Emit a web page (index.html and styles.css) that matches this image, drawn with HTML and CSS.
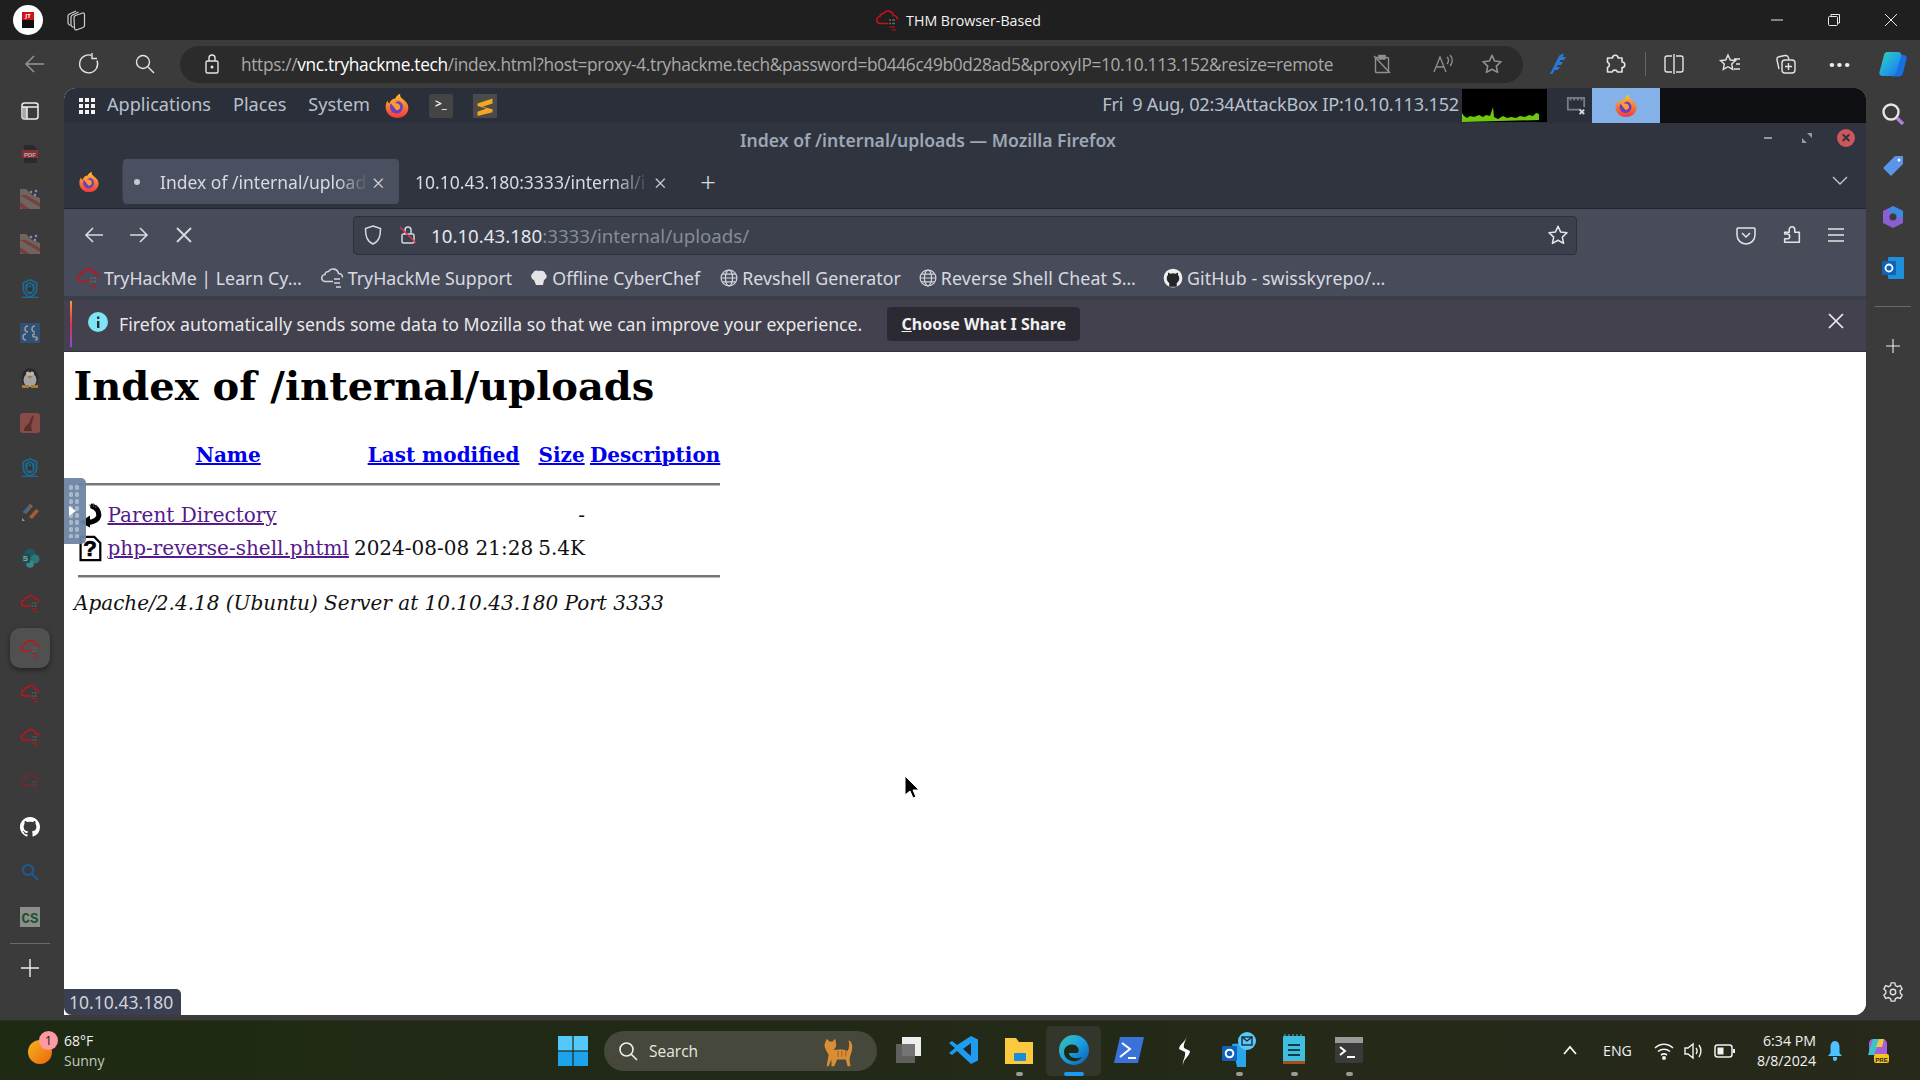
FILE: index.html
```html
<!DOCTYPE html>
<html lang="en">
<head>
    <meta charset="UTF-8">
    <title>THM Browser-Based</title>
    <link rel="stylesheet" href="styles.css">
</head>
<body>
    <svg class="sprites" width="0" height="0">
        <defs>
            <linearGradient id="fox-grad" x1="0" y1="0" x2="0" y2="1">
                <stop offset="0" stop-color="#ffc22e"/>
                <stop offset="1" stop-color="#f0393f"/>
            </linearGradient>
            <linearGradient id="copilot-grad" x1="0" y1="0" x2="1" y2="1">
                <stop offset="0" stop-color="#2fd6b5"/>
                <stop offset=".6" stop-color="#1f9be8"/>
                <stop offset="1" stop-color="#1f6fe0"/>
            </linearGradient>
            <linearGradient id="edge-grad" x1="0" y1="0" x2="1" y2="1">
                <stop offset="0" stop-color="#38c9a8"/>
                <stop offset=".5" stop-color="#1b9de2"/>
                <stop offset="1" stop-color="#0c5aa6"/>
            </linearGradient>
            <symbol id="thm" viewBox="0 0 24 24">
                <path d="M13 15.500H5.500a3.500 3.500 0 0 1-.5-7A3.200 3.200 0 0 1 8.500 5.500 5.500 5.500 0 0 1 18.500 7.500 4 4 0 0 1 22.500 11.500" fill="none" stroke="#c8101a" stroke-width="1.700"/>
                <path d="M14 12h2m1 0h3M14 15.500h2m1 0h3" stroke="#666" stroke-width="1.300"/>
                <path d="M14 19h6M17 22h4" stroke="#c8101a" stroke-width="1.200"/>
            </symbol>
            <symbol id="fox" viewBox="0 0 24 24">
                <path d="M12 23C5.500 23 1.500 18 1.500 13c0-2.500.8-4.600 1.800-6 .2 1.300.8 2.200 1.600 2.700C5.800 6.500 8.500 5 10.500 5 11 3.500 12.800 1.500 15 .8c-.5 2 .3 3.300 2 4.600 3.200 2.400 5.500 4.800 5.500 8.100C22.500 18.500 18.500 23 12 23z" fill="url(#fox-grad)"/>
                <circle cx="11.500" cy="13" r="6" fill="#6a3fc4"/>
                <path d="M6 9c2-2.500 6-3 8.500-1.500-2 0-4 .5-4.500 2 2.500-.5 5 .5 5 3.500 0 2-2 3-3.500 3" fill="#ff9a2e"/>
            </symbol>
            <symbol id="globe" viewBox="0 0 16 16">
                <g fill="none" stroke="#cfd3da" stroke-width="1.100">
                    <circle cx="8" cy="8" r="7"/>
                    <ellipse cx="8" cy="8" rx="3.200" ry="7"/>
                    <path d="M1 8h14M2 4.500h12M2 11.500h12"/>
                </g>
            </symbol>
            <symbol id="shield-lock" viewBox="0 0 24 24">
                <path d="M12 1l8 3.500v7.500c0 5-3.500 8-8 9.500C7.500 20 4 17 4 12V4.500z" fill="none" stroke="#1c6a93" stroke-width="2"/>
                <path d="M12 4l5.500 2.400V12c0 3.500-2.500 5.500-5.500 6.700C9 17.500 6.500 15.500 6.500 12V6.400z" fill="#1c6a93"/>
                <rect x="9" y="10" width="6" height="5" fill="#333"/>
                <path d="M10 10V8.500a2 2 0 0 1 4 0V10" fill="none" stroke="#333" stroke-width="1.200"/>
                <path d="M2 22h20" stroke="#1c6a93" stroke-width="1.600"/>
            </symbol>
            <symbol id="flag" viewBox="0 0 20 20">
                <rect width="20" height="20" fill="#8d7a72"/>
                <path d="M0 6l20 12v-4L6 6zM0 13l10 7H3l-3-2z" fill="#95433f"/>
                <path d="M6 0h14v9L12 6z" fill="#36384f"/>
                <circle cx="11" cy="3" r="1.300" fill="#bbb"/><circle cx="16" cy="2" r="1.300" fill="#bbb"/><circle cx="15" cy="6" r="1.300" fill="#bbb"/>
            </symbol>
            <symbol id="star" viewBox="0 0 24 24">
                <path d="M12 2.500l2.900 6.300 6.900.8-5.100 4.700 1.400 6.800-6.100-3.400-6.100 3.400 1.400-6.800-5.100-4.700 6.900-.8z" fill="none" stroke="currentColor" stroke-width="1.700" stroke-linejoin="round"/>
            </symbol>
            <symbol id="puzzle" viewBox="0 0 24 24">
                <path d="M4 9h5V6a3 3 0 0 1 6 0v3h5v11H4v-4h3a2.500 2.500 0 0 0 0-5H4z" fill="none" stroke="currentColor" stroke-width="1.700" stroke-linejoin="round"/>
            </symbol>
        </defs>
    </svg>

    <div class="screen">
        <header class="titlebar">
            <div class="tb-left">
                <div class="profile"><span class="profile-badge">JT</span></div>
                <svg class="ic-22" viewBox="0 0 22 22" fill="none" stroke="#cfcfcf" stroke-width="1.200"><path d="M2 7c0-1 .5-1.500 1.500-2L10 2M4.500 16.500L3 15.500C2.300 15 2 14.500 2 13.500V7"/><path d="M5 8c0-1 .5-1.500 1.500-2l6-3M7.500 18.500L6 17.500C5.300 17 5 16.500 5 15.500V8"/><path d="M8 8.500c0-1 .5-1.500 1.500-2l7-2.500c1-.3 2 .3 2 1.500v11c0 1-.5 1.500-1.500 2l-6 2.300c-1.200.4-2.500-.3-2.500-1.500z"/></svg>
            </div>
            <div class="tb-title">
                <svg class="ic-24"><use href="#thm"/></svg>
                <span>THM Browser-Based</span>
            </div>
            <div class="win-controls">
                <svg class="ic-14" viewBox="0 0 14 14" stroke="#e8e8e8" fill="none"><path d="M1 7h12"/></svg>
                <svg class="ic-14" viewBox="0 0 14 14" stroke="#e8e8e8" fill="none"><rect x="1.500" y="3.500" width="9" height="9" rx="1"/><path d="M4 3V1.500h8.500V10H11"/></svg>
                <svg class="ic-14" viewBox="0 0 14 14" stroke="#e8e8e8" fill="none"><path d="M1 1l12 12M13 1L1 13"/></svg>
            </div>
        </header>

        <div class="edge-bar">
            <div class="edge-nav">
                <svg class="ic-24 dim" viewBox="0 0 24 24" fill="none" stroke="currentColor" stroke-width="1.400"><path d="M21 12H3M11 4l-8 8 8 8"/></svg>
                <svg class="ic-24" viewBox="0 0 24 24" fill="none" stroke="currentColor" stroke-width="1.400"><path d="M19 8.500A9 9 0 1 1 13 3.200M14 1v5.500h5"/></svg>
                <svg class="ic-24" viewBox="0 0 24 24" fill="none" stroke="currentColor" stroke-width="1.400"><circle cx="10" cy="10" r="6.500"/><path d="M15 15l6 6"/></svg>
            </div>
            <div class="edge-url">
                <svg class="ic-20" viewBox="0 0 20 20" fill="none" stroke="currentColor" stroke-width="1.400"><rect x="4" y="7" width="12" height="12" rx="1.500"/><path d="M7 7V4a3 3 0 0 1 6 0v3"/><circle cx="10" cy="13" r=".8" fill="currentColor"/></svg>
                <span class="edge-url-text">https://<b>vnc.tryhackme.tech</b>/index.html?host=proxy-4.tryhackme.tech&amp;password=b0446c49b0d28ad5&amp;proxyIP=10.10.113.152&amp;resize=remote</span>
                <div class="edge-url-icons">
                    <svg class="ic-20 dim" viewBox="0 0 20 20" fill="none" stroke="currentColor" stroke-width="1.400"><rect x="3.500" y="3.500" width="13" height="15" rx="1"/><rect x="7" y="1.500" width="6" height="3.500" fill="currentColor"/><path d="M2 2l16 17"/></svg>
                    <svg class="ic-22 dim read-aloud" viewBox="0 0 22 22" fill="none" stroke="currentColor" stroke-width="1.300"><path d="M2 19l6-15 6 15M4.500 14h7M15 4c2 1.500 2 5 0 7M18 2c3 3 3 8 0 11"/></svg>
                    <svg class="ic-22 dim fav-star"><use href="#star"/></svg>
                </div>
            </div>
            <div class="edge-tools">
                <svg class="ic-22" viewBox="0 0 22 22"><path d="M3 21L12 3c1-1.500 3-2 5-2l-1.500 3H19l-2 3h-3.500L12.500 9H16l-2 3h-3.500l-1 2H13l-2 3H7.500l-2 4z" fill="#2a78d8"/></svg>
                <svg class="ic-24 edge-puzzle" viewBox="0 0 24 24" fill="none" stroke="currentColor" stroke-width="1.600" stroke-linejoin="round"><path d="M9.500 6a2.800 2.800 0 0 1 5.600 0H19v4a2.800 2.800 0 0 1 0 5.600V20h-4.500a2.800 2.800 0 0 0-5.300 0H4.500v-4.500a2.800 2.800 0 0 0 0-5.300V6z"/></svg>
                <span class="edge-sep"></span>
                <svg class="ic-22" viewBox="0 0 22 22" fill="none" stroke="currentColor" stroke-width="1.400"><path d="M11 1v20M9 3H4a2 2 0 0 0-2 2v12a2 2 0 0 0 2 2h5M13 3h5a2 2 0 0 1 2 2v12a2 2 0 0 1-2 2h-5"/></svg>
                <svg class="ic-24 edge-favs" viewBox="0 0 24 24" fill="none" stroke="currentColor" stroke-width="1.400"><path d="M10 3l2.300 5 5.200.6-3.800 3.500 1 5.200L10 14.700l-4.700 2.600 1-5.200L2.500 8.600 7.700 8zM16 7h6M18 12h4M16 17h6"/></svg>
                <svg class="ic-24" viewBox="0 0 24 24" fill="none" stroke="currentColor" stroke-width="1.400"><path d="M6 17l-2-9c-.3-1.500.5-3 2-3.300l6-1.200c1.500-.3 3 .5 3.300 2l.7 2"/><rect x="9" y="8" width="13" height="13" rx="3"/><path d="M15.500 11v7M12 14.500h7"/></svg>
                <span class="edge-dots">&middot;&middot;&middot;</span>
                <svg class="ic-30 edge-copilot" viewBox="0 0 30 30"><path d="M19 6h6c3 0 4 2 3.500 4L25 24c-.5 2-2 3.500-4.500 3.500H14z" fill="#1670e0"/><path d="M9 3h11c2 0 3 1 3.500 3L18 24c-.5 2-2 3-4 3H5c-3 0-4-2-3.500-4L6 6c.5-2 1.500-3 3-3z" fill="url(#copilot-grad)"/></svg>
            </div>
        </div>

        <div class="main-row">
            <aside class="side-left">
                <svg class="side-ic side-first" viewBox="0 0 20 20" fill="none" stroke="#eee" stroke-width="1.500"><rect x="2" y="2" width="16" height="16" rx="2.500"/><rect x="2.500" y="6" width="4.500" height="11.500" fill="#aaa" stroke="none"/><path d="M2 6h16M7 6v12"/></svg>
                <svg class="side-ic dimmed" viewBox="0 0 20 20"><path d="M4 1h9l4 4v14H4z" fill="#222"/><rect x="2" y="6" width="16" height="8" fill="#b02a36"/><text x="10" y="12.500" class="pdf-text">PDF</text></svg>
                <svg class="side-ic dimmed"><use href="#flag"/></svg>
                <svg class="side-ic dimmed"><use href="#flag"/></svg>
                <svg class="side-ic"><use href="#shield-lock"/></svg>
                <svg class="side-ic dimmed" viewBox="0 0 20 20"><rect width="20" height="20" fill="#2d5c99"/><path d="M8 3a3 3 0 1 0 0 6M15 3a3 3 0 1 0 0 6M6 11a3 3 0 1 0 0 6M15 11c-3 0-3 3 0 3s3 3 0 3" fill="none" stroke="#ccc" stroke-width="1.500"/></svg>
                <svg class="side-ic dimmed" viewBox="0 0 20 20"><ellipse cx="10" cy="10" rx="8.500" ry="10" fill="#222"/><ellipse cx="10" cy="12" rx="6.500" ry="7" fill="#ddd"/><circle cx="8" cy="5.500" r="2" fill="#fff"/><circle cx="12" cy="5.500" r="2" fill="#fff"/><path d="M7.500 8h5L10 11zM2 17h7v3H2zM11 17h7v3h-7z" fill="#e0a030"/></svg>
                <svg class="side-ic dimmed" viewBox="0 0 20 20"><rect width="20" height="20" rx="3" fill="#b5534f"/><path d="M14 2c-5 3-3 7-6 9-2 2-4 3-4 7h8c0-3-2-5 0-8" fill="#662a2a"/></svg>
                <svg class="side-ic"><use href="#shield-lock"/></svg>
                <svg class="side-ic dimmed" viewBox="0 0 20 20"><path d="M3 9l7-8 3 2-7 8zM9 14l7-8 3 2-7 8z" fill="#e0702a"/><path d="M3 9l6-7 2 1.500-6 7z" fill="#2a80d0"/><path d="M2 15l3 3H2z" fill="#ccc"/></svg>
                <svg class="side-ic dimmed" viewBox="0 0 20 20"><circle cx="10" cy="6" r="5.500" fill="#0d6d6d"/><circle cx="15" cy="11" r="4.500" fill="#1f9a9a"/><circle cx="10" cy="16" r="3.800" fill="#37b5b5"/><rect x="1" y="6" width="9" height="9" rx="1" fill="#0b5a5a"/><text x="5.500" y="13" class="sp-text">S</text></svg>
                <svg class="side-ic"><use href="#thm"/></svg>
                <span class="side-active"><svg class="side-ic"><use href="#thm"/></svg></span>
                <svg class="side-ic"><use href="#thm"/></svg>
                <svg class="side-ic"><use href="#thm"/></svg>
                <svg class="side-ic faded"><use href="#thm"/></svg>
                <svg class="side-ic" viewBox="0 0 16 16"><path fill="#fff" d="M8 0C3.580 0 0 3.580 0 8c0 3.540 2.290 6.530 5.470 7.590.4.070.55-.17.55-.38 0-.19-.01-.82-.01-1.490-2.010.37-2.530-.49-2.690-.94-.09-.23-.48-.94-.82-1.130-.28-.15-.68-.52-.01-.53.630-.01 1.080.58 1.230.82.720 1.210 1.870.87 2.330.66.070-.52.280-.87.510-1.070-1.780-.2-3.640-.89-3.640-3.950 0-.87.310-1.590.82-2.150-.08-.2-.36-1.020.08-2.120 0 0 .67-.21 2.200.82.640-.18 1.320-.27 2-.27s1.360.09 2 .27c1.530-1.040 2.200-.82 2.200-.82.440 1.100.16 1.920.08 2.120.51.560.82 1.270.82 2.150 0 3.070-1.870 3.750-3.650 3.950.29.250.54.730.54 1.480 0 1.070-.01 1.930-.01 2.200 0 .21.150.46.550.38A8.010 8.010 0 0 0 16 8c0-4.420-3.580-8-8-8z"/></svg>
                <svg class="side-ic" viewBox="0 0 20 20" fill="none" stroke="#1b5c96" stroke-width="2.200"><circle cx="8" cy="8" r="5"/><path d="M12 12l6 6"/></svg>
                <svg class="side-ic" viewBox="0 0 20 20"><rect width="20" height="20" fill="#8a8f8a"/><text x="10" y="16" class="cs-text">CS</text></svg>
                <span class="side-rule"></span>
                <svg class="side-plus" viewBox="0 0 18 18" stroke="#eee" stroke-width="1.400"><path d="M9 0v18M0 9h18"/></svg>
            </aside>

            <main class="remote">
                <div class="gnome-panel">
                    <svg class="ic-18" viewBox="0 0 18 18" fill="#f2f2f2"><rect x="1" y="1" width="4" height="4"/><rect x="7" y="1" width="4" height="4"/><rect x="13" y="1" width="4" height="4"/><rect x="1" y="7" width="4" height="4"/><rect x="7" y="7" width="4" height="4"/><rect x="13" y="7" width="4" height="4"/><rect x="1" y="13" width="4" height="4"/><rect x="7" y="13" width="4" height="4"/><rect x="13" y="13" width="4" height="4"/></svg>
                    <span class="panel-menu panel-apps">Applications</span>
                    <span class="panel-menu">Places</span>
                    <span class="panel-menu">System</span>
                    <svg class="ic-26 panel-launch"><use href="#fox"/></svg>
                    <span class="term-btn">&gt;_</span>
                    <span class="subl-btn"><svg class="ic-20" viewBox="0 0 16 16"><path d="M2 6l12-4v4L6 8.500l8 2V13L2 16v-3.500l7-2.500-7-2z" fill="#f5a623"/></svg></span>
                    <span class="panel-clock">Fri&nbsp; 9 Aug, 02:34AttackBox IP:10.10.113.152</span>
                    <svg class="net-graph" viewBox="0 0 85 33" preserveAspectRatio="none"><rect width="85" height="33" fill="#000"/><path d="M0 33V24l2 3 3 2 3-2 4 1 5-2 4 2 3-2 4 1 3-9 1 10 4 2 5-3 4 2 4-1 5 1 4-2 5 1 4-2 4 1 3-3 3 1v6z" fill="#6fc80e"/></svg>
                    <svg class="net-icon" viewBox="0 0 22 22" fill="none" stroke="#7a7d82" stroke-width="2"><path d="M17 15H2V2h18v10M5 2v3M9 2v3M13 2v3M17 2v3"/><path d="M15 15l5 5M20 15l-5 5" stroke="#ddd"/></svg>
                    <span class="task-active"><svg class="ic-24"><use href="#fox"/></svg></span>
                    <span class="task-empty"></span>
                </div>

                <div class="fx-titlebar">
                    <span class="fx-title">Index of /internal/uploads &mdash; Mozilla Firefox</span>
                    <div class="fx-win">
                        <span class="fx-min"></span>
                        <svg class="ic-10" viewBox="0 0 10 10" fill="#999"><path d="M5 0h5v5zM0 5v5h5z"/></svg>
                        <span class="fx-close">&times;</span>
                    </div>
                </div>

                <div class="fx-tabs">
                    <svg class="ic-22 fx-logo"><use href="#fox"/></svg>
                    <div class="tab tab-active">
                        <span class="tab-dot"></span>
                        <span class="tab-label">Index of /internal/upload</span>
                        <span class="tab-x">&times;</span>
                    </div>
                    <div class="tab">
                        <span class="tab-label">10.10.43.180:3333/internal/i</span>
                        <span class="tab-x">&times;</span>
                    </div>
                    <span class="tab-new">+</span>
                    <svg class="tab-list" viewBox="0 0 16 10" fill="none" stroke="#c5c9d0" stroke-width="1.300"><path d="M1 1l7 7 7-7"/></svg>
                </div>

                <div class="fx-nav">
                    <svg class="ic-20 nav-btn" viewBox="0 0 20 20" fill="none" stroke="currentColor" stroke-width="1.600"><path d="M19 10H2M9 3l-7 7 7 7"/></svg>
                    <svg class="ic-20 nav-btn" viewBox="0 0 20 20" fill="none" stroke="currentColor" stroke-width="1.600"><path d="M1 10h17M11 3l7 7-7 7"/></svg>
                    <svg class="ic-20 nav-btn" viewBox="0 0 20 20" fill="none" stroke="currentColor" stroke-width="1.800"><path d="M3 3l14 14M17 3L3 17"/></svg>
                    <div class="urlbar">
                        <svg class="ic-20" viewBox="0 0 20 20" fill="none" stroke="#d5d8de" stroke-width="1.500"><path d="M10 1l7.500 2.500c0 7-1 12.500-7.500 15.500C3.500 16 2.500 10.500 2.500 3.500z"/></svg>
                        <svg class="ic-20 url-lock" viewBox="0 0 20 20" fill="none"><rect x="4" y="9" width="12" height="9" rx="1.500" stroke="#d5d8de" stroke-width="1.500"/><path d="M7 9V5a3 3 0 0 1 6 0v4" stroke="#d5d8de" stroke-width="1.500"/><path d="M2 2l16 16" stroke="#e0314a" stroke-width="1.500"/></svg>
                        <span class="url-text">10.10.43.180<span class="url-rest">:3333/internal/uploads/</span></span>
                        <svg class="ic-22 url-star"><use href="#star"/></svg>
                    </div>
                    <div class="nav-right">
                        <svg class="ic-20" viewBox="0 0 20 20" fill="none" stroke="currentColor" stroke-width="1.500"><path d="M2 3h16a1 1 0 0 1 1 1v6a9 9 0 0 1-18 0V4a1 1 0 0 1 1-1zM6 8l4 4 4-4"/></svg>
                        <svg class="ic-22"><use href="#puzzle"/></svg>
                        <svg class="ic-20 nav-menu" viewBox="0 0 20 20" stroke="currentColor" stroke-width="1.700"><path d="M2 4h16M2 10h16M2 16h16"/></svg>
                    </div>
                </div>

                <div class="fx-bookmarks">
                    <span class="bm"><svg class="ic-24"><use href="#thm"/></svg>TryHackMe | Learn Cy&hellip;</span>
                    <span class="bm"><svg class="ic-24" viewBox="0 0 24 24" fill="none" stroke="#d0d3d9" stroke-width="1.600"><path d="M13 15.500H5.500a3.500 3.500 0 0 1-.5-7A3.200 3.200 0 0 1 8.500 5.500 5.500 5.500 0 0 1 18.500 7.500 4 4 0 0 1 22.500 11.500M14 13h6M14 17h6M16 21h5"/></svg>TryHackMe Support</span>
                    <span class="bm"><svg class="ic-18" viewBox="0 0 18 18" fill="#e4e4e4"><path d="M4 11C1 10 0 6 3 4c1-3 4-3 6-2 3-1 6 0 6.500 3C18 7 16 10 14 11l-1 5H6z"/></svg>Offline CyberChef</span>
                    <span class="bm bm-revshell"><svg class="ic-18"><use href="#globe"/></svg>Revshell Generator</span>
                    <span class="bm bm-cheat"><svg class="ic-18"><use href="#globe"/></svg>Reverse Shell Cheat S&hellip;</span>
                    <span class="bm bm-github"><svg class="ic-20" viewBox="0 0 16 16"><circle cx="8" cy="8" r="7.500" fill="#eee"/><path d="M5 15v-3C3.500 11 3 9.500 3 8c0-1 .5-2 1-2.500V3.500l2 1a6 6 0 0 1 4 0l2-1v2c.5.500 1 1.500 1 2.500 0 1.500-.5 3-2 4v3z" fill="#23252b"/></svg>GitHub - swisskyrepo/&hellip;</span>
                </div>

                <div class="fx-notice">
                    <span class="notice-edge"></span>
                    <svg class="ic-20 notice-info" viewBox="0 0 20 20"><circle cx="10" cy="10" r="10" fill="#7fe4f5"/><rect x="9" y="9" width="2.400" height="7" fill="#2b2a33"/><rect x="9" y="4.500" width="2.400" height="2.400" fill="#2b2a33"/></svg>
                    <span class="notice-text">Firefox automatically sends some data to Mozilla so that we can improve your experience.</span>
                    <span class="notice-btn"><u>C</u>hoose What I Share</span>
                    <svg class="ic-18 notice-x" viewBox="0 0 18 18" stroke="#eee" stroke-width="1.700"><path d="M2 2l14 14M16 2L2 16"/></svg>
                </div>

                <section class="listing">
                    <h1>Index of /internal/uploads</h1>
                    <table class="files">
                        <tr>
                            <th class="col-icon"></th>
                            <th><a href="#">Name</a></th>
                            <th><a href="#">Last modified</a></th>
                            <th><a href="#">Size</a></th>
                            <th><a href="#">Description</a></th>
                        </tr>
                        <tr class="rule-top"><th colspan="5" class="rule-cell"><hr></th></tr>
                        <tr>
                            <td class="col-icon">
                                <svg class="file-ic" viewBox="0 0 28 30"><path d="M15 4c7 1 10 7 9 12-1 4-5 6-11 7" fill="none" stroke="#000" stroke-width="6"/><path d="M14 15v14L2 23z" fill="#000"/><path d="M14 2l1 4M18 1v4M22 3l-2 3" stroke="#444" stroke-width="1.500"/></svg>
                            </td>
                            <td><a class="seen" href="#">Parent Directory</a></td>
                            <td></td>
                            <td class="col-size">-</td>
                            <td></td>
                        </tr>
                        <tr>
                            <td class="col-icon">
                                <svg class="file-ic" viewBox="0 0 28 30"><path d="M3 1.500h16l7 7V28.500H3z" fill="#fff" stroke="#000" stroke-width="2.600"/><text x="14" y="24" class="unknown-mark">?</text></svg>
                            </td>
                            <td><a class="seen" href="#">php-reverse-shell.phtml</a></td>
                            <td>2024-08-08 21:28</td>
                            <td class="col-size">5.4K</td>
                            <td></td>
                        </tr>
                        <tr class="rule-bottom"><th colspan="5" class="rule-cell"><hr></th></tr>
                    </table>
                    <address>Apache/2.4.18 (Ubuntu) Server at 10.10.43.180 Port 3333</address>

                    <div class="vnc-handle">
                        <span class="handle-dots"></span>
                        <span class="handle-arrow"></span>
                    </div>
                    <svg class="cursor" viewBox="0 0 16 24"><path d="M1 1v19l5-4 3 7 3-1-3-7h6z" fill="#000" stroke="#fff" stroke-width="1"/></svg>
                    <span class="status-tip">10.10.43.180</span>
                </section>
            </main>

            <aside class="side-right">
                <svg class="ic-26" viewBox="0 0 26 26" fill="none"><circle cx="11" cy="11" r="7.500" stroke="#e6e6e6" stroke-width="2.400"/><path d="M17 17l6 6" stroke="#b47fe0" stroke-width="3.500"/></svg>
                <svg class="ic-24" viewBox="0 0 24 24"><path d="M14 2h8v8L10 22 2 14z" fill="#5b94e8"/><circle cx="18" cy="6" r="1.500" fill="#fff"/></svg>
                <svg class="ic-24" viewBox="0 0 24 24"><path d="M12 1l10 5v12l-10 5-10-5V6z" fill="#8a5fd6"/><path d="M12 1l10 5v6l-8 2-3-3 3-2-8-3z" fill="#3a8ae0"/><circle cx="12" cy="12" r="3.500" fill="#3b3b3b"/></svg>
                <svg class="ic-24" viewBox="0 0 24 24"><rect x="7" y="1" width="16" height="22" rx="1" fill="#1e8fd8"/><rect x="1" y="5" width="14" height="14" rx="1" fill="#0f62b8"/><circle cx="8" cy="12" r="3.500" fill="none" stroke="#fff" stroke-width="1.800"/></svg>
                <span class="side-rule"></span>
                <svg class="side-plus" viewBox="0 0 18 18" stroke="#eee" stroke-width="1.400"><path d="M9 0v18M0 9h18"/></svg>
                <svg class="ic-22 gear" viewBox="0 0 24 24" fill="none" stroke="#e0e0e0" stroke-width="1.500"><circle cx="12" cy="12" r="3"/><path d="M10 2h4l.6 3 2.400 1.200L20 5l2 3.500-2.200 2 .2 2.800L22 15.500 20 19l-3-1-2.400 1.400L14 22h-4l-.6-2.600L7 18l-3 1-2-3.500 2.200-2.200-.1-2.600L2 8.500 4 5l3 1.200L9.400 5z"/></svg>
            </aside>
        </div>

        <footer class="taskbar">
            <div class="weather">
                <span class="sun"><span class="sun-badge">1</span></span>
                <div class="weather-text">
                    <span class="temp">68&deg;F</span>
                    <span class="cond">Sunny</span>
                </div>
            </div>
            <div class="task-center">
                <svg class="win-logo" viewBox="0 0 30 30" fill="#4cc2ff"><rect x="0" y="0" width="14.400" height="14.400" fill="#55c8fb"/><rect x="15.600" y="0" width="14.400" height="14.400" fill="#55c8fb"/><rect x="0" y="15.600" width="14.400" height="14.400" fill="#1ba3ec"/><rect x="15.600" y="15.600" width="14.400" height="14.400" fill="#1ba3ec"/></svg>
                <div class="task-search">
                    <svg class="ic-20" viewBox="0 0 20 20" fill="none" stroke="#eee" stroke-width="1.600"><circle cx="8.500" cy="8.500" r="6.500"/><path d="M13 13l6 6"/></svg>
                    <span>Search</span>
                    <svg class="cat" viewBox="0 0 40 32"><path d="M4 8l2-5 3 3 3 0 3-3 1 6c0 3-1 5-3 6 5-1 11-1 15 1 2-3 2-8 1-11 2 0 4 3 4 7 0 5-3 9-3 13l1 7h-3l-2-7h-9l-3 7h-3v-7l-3 7H6l2-12C5 14 3 12 4 8z" fill="#d98d35"/><path d="M18 16v6M22 16v6M26 16v6" stroke="#a8641f" stroke-width="1.200"/></svg>
                </div>
                <div class="task-icons">
                    <span class="task-app"><svg class="ic-32" viewBox="0 0 32 32"><rect x="9" y="3" width="19" height="19" fill="#eee"/><rect x="3" y="10" width="19" height="19" fill="#666" opacity=".9"/></svg></span>
                    <span class="task-app"><svg class="ic-32" viewBox="0 0 32 32"><path d="M23 2l7 3.500v21L23 30 9 17l-5 4-3-2 6-5-6-5 3-2 5 4z" fill="#1f9cf0"/><path d="M23 9l-8 6 8 7z" fill="#20262a"/></svg></span>
                    <span class="task-app has-dot"><svg class="ic-32" viewBox="0 0 32 32"><path d="M2 4h11l3 4h14v22H2z" fill="#fbc93d"/><rect x="11" y="19" width="12" height="8" rx="1" fill="#1a8cd8"/></svg></span>
                    <span class="task-app is-open"><svg class="ic-32" viewBox="0 0 32 32"><circle cx="16" cy="16" r="15" fill="url(#edge-grad)"/><path d="M6 18c0-6 6-9 11-7 4 2 5 7 2 8h-8c0 4 6 7 13 4-4 7-18 5-18-5z" fill="#1f2a14"/></svg></span>
                    <span class="task-app"><svg class="ic-32" viewBox="0 0 32 32"><path d="M7 3h24l-6 26H1z" fill="#3b72d9"/><path d="M9 9l8 6-10 8M15 24h8" stroke="#fff" stroke-width="2" fill="none"/></svg></span>
                    <span class="task-app"><svg class="ic-32" viewBox="0 0 32 32"><path d="M19 1c0 6-8 9-8 14l6 3c1 5-3 9-2 13 0-6 7-9 7-14l-6-3c-1-5 3-9 3-13z" fill="#fff"/></svg></span>
                    <span class="task-app has-dot"><svg class="ic-36" viewBox="0 0 36 36"><path d="M11 12l14-1v24H16z" fill="#28a8ea"/><rect x="1" y="14" width="15" height="15" rx="1" fill="#0f62b8"/><circle cx="8.500" cy="21.500" r="3.800" fill="none" stroke="#fff" stroke-width="2"/><circle cx="26" cy="9" r="9" fill="#5cc8f7"/><rect x="21" y="5" width="10" height="8" fill="none" stroke="#123" stroke-width="1.300"/><path d="M21 5l5 4 5-4" fill="none" stroke="#123" stroke-width="1.300"/></svg></span>
                    <span class="task-app has-dot"><svg class="ic-32" viewBox="0 0 32 32"><rect x="5" y="2" width="22" height="28" rx="1" fill="#3fbfdf"/><rect x="5" y="27" width="22" height="3" fill="#a84f14"/><path d="M10 11h12M10 16h12M10 21h12" stroke="#10394a" stroke-width="2"/><path d="M7 0v4M11 0v4M15 0v4M19 0v4M23 0v4" stroke="#3fbfdf"/></svg></span>
                    <span class="task-app has-dot"><svg class="ic-32" viewBox="0 0 32 32"><rect x="2" y="3" width="28" height="26" rx="2" fill="#3a3a3a"/><rect x="2" y="3" width="28" height="6" fill="#999"/><path d="M7 13l5 4-5 4" stroke="#fff" stroke-width="2" fill="none"/><path d="M14 23h8" stroke="#fff" stroke-width="2"/></svg></span>
                </div>
            </div>
            <div class="tray">
                <svg class="ic-16" viewBox="0 0 16 16" fill="none" stroke="#f2f2f2" stroke-width="1.800"><path d="M2 11l6-7 6 7"/></svg>
                <span class="tray-lang">ENG</span>
                <svg class="ic-20 tray-wifi" viewBox="0 0 20 20" fill="none" stroke="#f2f2f2" stroke-width="1.600"><path d="M1 7c5-5 13-5 18 0M4 10.500c3.500-3 8.500-3 12 0M7 14c2-1.500 4-1.500 6 0"/><circle cx="10" cy="17" r="1.200" fill="#f2f2f2"/></svg>
                <svg class="ic-20 tray-vol" viewBox="0 0 20 20" fill="none" stroke="#f2f2f2" stroke-width="1.400"><path d="M2 7h3l5-4v14l-5-4H2zM13 7c1.500 2 1.500 4 0 6M16 4c2.500 3.500 2.500 8.500 0 12"/></svg>
                <svg class="ic-22 tray-batt" viewBox="0 0 22 22" fill="none" stroke="#f2f2f2" stroke-width="1.500"><rect x="1" y="5" width="17" height="12" rx="2.500"/><rect x="3.500" y="7.500" width="6" height="7" fill="#f2f2f2" stroke="none"/><path d="M20 9v4" stroke-width="2"/></svg>
                <div class="tray-clock"><span>6:34 PM</span><span>8/8/2024</span></div>
                <svg class="ic-20 tray-bell" viewBox="0 0 20 20" fill="#4cc2ff"><path d="M10 0c3 0 4.500 3 4.500 6v6l2.500 3H3l2.500-3V6c0-3 1.500-6 4.500-6zM8 16h4v2a2 2 0 0 1-4 0z"/></svg>
                <svg class="ic-30 tray-copilot" viewBox="0 0 30 30"><path d="M8 3h9c3 0 5 2 5 5v11H4V7c0-2 2-4 4-4z" fill="#a65fd9"/><path d="M8 3h7L9 19H3z" fill="#38c4c9"/><path d="M14 3h5l-2 8h-6z" fill="#f5c542"/><rect x="9" y="18" width="15" height="9" rx="2" fill="#f5c518"/><text x="16.500" y="25.500" class="pre-text">PRE</text></svg>
            </div>
        </footer>
    </div>
</body>
</html>
```

FILE: styles.css
```css
* {
    box-sizing: border-box;
}
body {
    margin: 0;
    font-family: "Noto Sans", sans-serif;
    background-color: #3b3b3b;
    color: #f2f2f2;
}
svg {
    display: block;
    flex: none;
    color: #e4e4e4;
}
.sprites {
    position: absolute;
}
.ic-10 { width: 10px; height: 10px; }
.ic-14 { width: 14px; height: 14px; }
.ic-16 { width: 16px; height: 16px; }
.ic-18 { width: 18px; height: 18px; }
.ic-20 { width: 20px; height: 20px; }
.ic-22 { width: 22px; height: 22px; }
.ic-24 { width: 24px; height: 24px; }
.ic-26 { width: 26px; height: 26px; }
.ic-30 { width: 30px; height: 30px; }
.ic-32 { width: 32px; height: 32px; }
.ic-36 { width: 36px; height: 36px; }
.screen {
    width: 1920px;
    height: 1080px;
    display: flex;
    flex-direction: column;
    overflow: hidden;
}

/* edge title bar */
.titlebar {
    height: 40px;
    background-color: #1f1f1f;
    display: grid;
    grid-template-columns: 1fr auto 1fr;
    align-items: center;
}
.tb-left {
    display: flex;
    align-items: center;
    gap: 23px;
    padding-left: 13px;
}
.profile {
    width: 30px;
    height: 30px;
    border-radius: 50%;
    background-color: #fff;
    display: flex;
    align-items: center;
    justify-content: center;
}
.profile-badge {
    width: 12px;
    height: 16px;
    background: linear-gradient(#d0121b 50%, #111 50%);
    color: #fff;
    font-size: 6px;
    font-weight: bold;
    line-height: 8px;
    text-align: center;
}
.tb-title {
    display: flex;
    align-items: center;
    gap: 7px;
    font-family: "Open Sans", sans-serif;
    font-size: 14.200px;
    color: #f4f4f4;
    transform: translateX(-2px);
}
.win-controls {
    justify-self: end;
    display: flex;
    gap: 43px;
    padding-right: 22px;
}

/* edge toolbar */
.edge-bar {
    height: 48px;
    display: flex;
    align-items: center;
    background-color: #3b3b3b;
}
.edge-nav {
    width: 180px;
    display: flex;
    align-items: center;
    gap: 31px;
    padding-left: 23px;
}
.dim {
    opacity: .55;
}
.edge-url {
    width: 1343px;
    height: 37px;
    border-radius: 19px;
    background-color: #2b2b2b;
    display: flex;
    align-items: center;
    padding: 0 20px 0 22px;
    gap: 19px;
}
.edge-url-text {
    font-family: "Open Sans", sans-serif;
    font-size: 17.300px;
    letter-spacing: -.335px;
    color: #a9a9a9;
    white-space: nowrap;
}
.edge-url-text b {
    font-weight: normal;
    color: #fff;
}
.edge-url-icons {
    margin-left: auto;
    display: flex;
    align-items: center;
}
.read-aloud {
    margin-left: 40px;
}
.fav-star {
    margin-left: 27px;
}
.edge-tools {
    flex: 1;
    display: flex;
    align-items: center;
    gap: 31px;
    padding-left: 24px;
}
.edge-puzzle {
    margin-left: 3px;
}
.edge-favs {
    margin-left: 2px;
}
.edge-copilot {
    margin-left: -5px;
}
.edge-sep {
    width: 1px;
    height: 24px;
    background-color: #666;
    margin: 0 -13.500px;
}
.edge-dots {
    width: 24px;
    font-size: 24px;
    font-weight: bold;
    line-height: 20px;
    text-align: center;
    color: #eee;
    letter-spacing: 1px;
}

/* main area */
.main-row {
    flex: 1;
    display: flex;
    min-height: 0;
    padding-bottom: 5px;
}
.side-left {
    width: 64px;
    display: flex;
    flex-direction: column;
    align-items: center;
    padding: 11px 4px 0 0;
    gap: 24.900px;
}
.side-ic {
    width: 20px;
    height: 20px;
}
.side-first {
    margin: 2px 0 -2px;
}
.dimmed {
    opacity: .65;
}
.faded {
    opacity: .45;
}
.side-active {
    width: 40px;
    height: 40px;
    margin: -10px 0;
    border-radius: 10px;
    background-color: #505050;
    box-shadow: 0 2px 5px rgba(0, 0, 0, .45);
    display: flex;
    align-items: center;
    justify-content: center;
}
.side-rule {
    width: 40px;
    height: 1px;
    background-color: #6a6a6a;
    margin-top: -9px;
}
.side-plus {
    width: 18px;
    height: 18px;
    margin-top: -10px;
}
.pdf-text, .sp-text, .cs-text, .pre-text, .unknown-mark {
    font-family: "Liberation Sans", sans-serif;
    font-weight: bold;
    text-anchor: middle;
}
.pdf-text { font-size: 6px; fill: #eee; }
.sp-text { font-size: 8px; fill: #ddd; }
.cs-text { font-family: "Liberation Mono", monospace; font-size: 14px; fill: #21502f; }
.pre-text { font-size: 6px; fill: #222; }
.unknown-mark { font-size: 26px; fill: #000; stroke: #000; stroke-width: .8px; }

.remote {
    width: 1802px;
    display: flex;
    flex-direction: column;
    border-radius: 12px 12px 12px 0;
    overflow: hidden;
    background-color: #fff;
}

/* gnome panel */
.gnome-panel {
    height: 35px;
    background-color: #2a2f3a;
    color: #b9c0cc;
    display: flex;
    align-items: center;
    padding-left: 14px;
    font-size: 18.100px;
    line-height: 33px;
    flex: none;
}
.panel-menu {
    margin-left: 22px;
    align-self: flex-start;
}
.panel-apps {
    margin-left: 11px;
}
.panel-launch {
    margin-left: 14px;
}
.term-btn {
    width: 24px;
    height: 24px;
    margin-left: 19px;
    background-color: #444;
    color: #eee;
    border-radius: 2px;
    font-size: 12px;
    font-weight: bold;
    line-height: 20px;
    text-align: center;
}
.subl-btn {
    width: 24px;
    height: 24px;
    margin-left: 20px;
    background-color: #4a4a4a;
    display: flex;
    align-items: center;
    justify-content: center;
}
.panel-clock {
    margin-left: auto;
    white-space: nowrap;
    letter-spacing: -.2px;
    align-self: flex-start;
}
.net-graph {
    width: 85px;
    height: 33px;
    margin-left: 3px;
}
.net-icon {
    width: 20px;
    height: 20px;
    margin-left: 19px;
}
.task-active {
    width: 68px;
    height: 35px;
    margin-left: 6px;
    background-color: #84b2e8;
    display: flex;
    align-items: center;
    justify-content: center;
}
.task-empty {
    width: 206px;
    align-self: stretch;
    background-color: #0d0f13;
}

/* firefox window */
.fx-titlebar {
    height: 36px;
    flex: none;
    background-color: #2f343f;
    position: relative;
    display: flex;
    align-items: center;
    justify-content: center;
    padding: 0 74px 3px 0;
}
.fx-title {
    font-size: 17.600px;
    font-weight: 600;
    color: #9ea7b5;
}
.fx-win {
    position: absolute;
    right: 11px;
    top: 6px;
    display: flex;
    align-items: center;
    gap: 25px;
}
.fx-min {
    width: 8px;
    height: 2px;
    background-color: #999;
    margin-right: 5px;
}
.fx-close {
    width: 18px;
    height: 18px;
    border-radius: 50%;
    background-color: #cc575d;
    color: #2f343f;
    font-size: 18px;
    font-weight: bold;
    line-height: 17px;
    text-align: center;
}
.fx-tabs {
    height: 50px;
    flex: none;
    background-color: #2f343f;
    border-bottom: 1px solid #23262e;
    display: flex;
    align-items: flex-start;
    color: #d7dae0;
}
.fx-logo {
    margin: 12px 0 0 14px;
}
.tab {
    width: 276px;
    height: 45px;
    display: flex;
    align-items: center;
    padding-left: 16px;
    font-size: 17.500px;
    position: relative;
}
.tab-active {
    margin: 0 0 0 23px;
    background-color: #4b5060;
    border-radius: 4px;
    padding-left: 11px;
    box-shadow: -6px 0 0 -5px #3e434f;
}
.tab-dot {
    width: 6px;
    height: 6px;
    border-radius: 50%;
    background-color: #c5c9d0;
    margin-right: 20px;
}
.tab-label {
    white-space: nowrap;
    width: 208px;
    -webkit-mask-image: linear-gradient(to right, #000 85%, transparent);
    mask-image: linear-gradient(to right, #000 85%, transparent);
}
.tab:not(.tab-active) .tab-label {
    width: 235px;
}
.tab-x {
    font-size: 22px;
    line-height: 20px;
    margin-left: 4px;
    font-weight: 300;
}
.tab-new {
    font-size: 28px;
    font-weight: 300;
    line-height: 45px;
    margin-left: 25px;
}
.tab-list {
    width: 16px;
    height: 10px;
    margin: 17px 18px 0 auto;
}
.fx-nav {
    height: 50px;
    flex: none;
    background-color: #484c5a;
    display: flex;
    align-items: center;
    padding: 2px 0 0 20px;
    gap: 25px;
}
.nav-btn {
    color: #d7dae0;
}
.urlbar {
    width: 1224px;
    height: 39px;
    margin-left: 134px;
    background-color: #3b404c;
    border: 1px solid #2c303a;
    border-radius: 4px;
    display: flex;
    align-items: center;
    padding-left: 9px;
    font-size: 18.700px;
    line-height: 35px;
    color: #e3e6ea;
}
.url-lock {
    margin-left: 15px;
}
.url-text {
    margin-left: 13px;
    white-space: nowrap;
}
.url-rest {
    color: #868c98;
}
.url-star {
    margin-left: auto;
    margin-right: 7px;
}
.nav-right {
    display: flex;
    align-items: center;
    gap: 25px;
    margin-left: 134px;
    color: #d7dae0;
}
.nav-menu {
    margin-left: -2px;
}
.fx-bookmarks {
    height: 37px;
    flex: none;
    background-color: #484c5a;
    display: flex;
    align-items: center;
    padding-left: 12px;
    gap: 18px;
    font-size: 17.800px;
    color: #d7dae0;
}
.bm {
    display: flex;
    align-items: center;
    gap: 4px;
    white-space: nowrap;
}
.bm-revshell {
    margin-left: 2px;
}
.bm-cheat {
    letter-spacing: .15px;
}
.bm-github {
    letter-spacing: .1px;
}
.bm-github svg {
    margin-left: 9px;
}
.fx-notice {
    height: 56px;
    flex: none;
    background-color: #42414d;
    border-top: 4px solid #3a3e4a;
    border-bottom: 1px solid #33333c;
    display: flex;
    align-items: center;
    padding: 0 0 3px 6px;
    color: #e8e8ea;
}
.notice-edge {
    width: 2px;
    height: 46px;
    background: linear-gradient(#ff9a2e, #e0314a 50%, #8a4be0);
    margin-right: 16px;
}
.notice-info {
    margin-bottom: 5px;
}
.notice-text {
    margin-left: 11px;
    font-size: 17.700px;
    white-space: nowrap;
}
.notice-btn {
    margin-left: 25px;
    width: 193px;
    height: 34px;
    background-color: #2b2a33;
    border-radius: 4px;
    font-size: 16px;
    font-weight: bold;
    text-align: center;
    line-height: 34px;
    color: #f0f0f0;
}
.notice-x {
    margin: 0 21px 6px auto;
}

/* apache listing */
.listing {
    flex: 1;
    position: relative;
    background-color: #fff;
    color: #111;
    font-family: "DejaVu Serif", serif;
    font-size: 20px;
    padding: 0 0 0 8.500px;
}
.listing h1 {
    margin: 8px 0 0 1px;
    font-size: 40px;
    line-height: 52px;
    color: #000;
}
.files {
    margin-top: 27px;
    border-spacing: 5px 0;
    border-collapse: separate;
}
.files th, .files td {
    padding: 0;
    white-space: nowrap;
}
.files th {
    line-height: 33px;
}
.files a {
    color: #0000ee;
}
.files a.seen {
    color: #551a8b;
}
.col-icon {
    width: 25px;
}
.col-size {
    text-align: right;
}
.rule-cell hr {
    border: 0;
    border-top: 2px solid #777;
    border-bottom: 1px solid #bbb;
}
.rule-top hr {
    margin: 11px 0 13px;
}
.rule-bottom hr {
    margin: 10px 0 11px;
}
.files td {
    height: 33px;
    line-height: 33px;
}
.file-ic {
    width: 24px;
    height: 27px;
}
.listing address {
    margin: 2px 0 0 1.500px;
    color: #111;
}
.vnc-handle {
    position: absolute;
    left: 0;
    top: 126px;
    width: 22px;
    height: 66px;
    background-color: #6e84a3;
    border-radius: 0 5px 5px 0;
    opacity: .95;
}
.handle-dots {
    position: absolute;
    left: 4px;
    top: 6px;
    width: 12px;
    height: 54px;
    background-image: radial-gradient(#a5b4c8 2px, transparent 2.500px);
    background-size: 6px 7px;
}
.handle-arrow {
    position: absolute;
    left: 5px;
    top: 28px;
    border-left: 7px solid #fff;
    border-top: 5px solid transparent;
    border-bottom: 5px solid transparent;
}
.cursor {
    position: absolute;
    left: 840px;
    top: 423px;
    width: 16px;
    height: 24px;
}
.status-tip {
    position: absolute;
    left: 0;
    bottom: 0;
    width: 117px;
    height: 26px;
    background-color: #3a3f52;
    color: #d0d3da;
    border-radius: 0 5px 0 8px;
    font-family: "Noto Sans", sans-serif;
    font-size: 17.500px;
    line-height: 26px;
    padding-left: 5px;
}

/* right sidebar */
.side-right {
    width: 54px;
    display: flex;
    flex-direction: column;
    align-items: center;
    padding: 13px 0 12px 0;
    gap: 27px;
}
.side-right .side-rule {
    width: 36px;
    margin-top: -1px;
}
.side-right .side-plus {
    width: 14px;
    height: 14px;
    margin-top: 5px;
}
.gear {
    margin-top: auto;
}

/* windows taskbar */
.taskbar {
    height: 60px;
    flex: none;
    background: linear-gradient(to right, #1e2a14, #27291a);
    display: grid;
    grid-template-columns: 1fr auto 1fr;
    align-items: center;
    border-top: 1px solid #2c2f22;
}
.weather {
    display: flex;
    align-items: center;
    padding-left: 28px;
}
.sun {
    width: 24px;
    height: 24px;
    border-radius: 50%;
    background: linear-gradient(135deg, #f2b61e, #f0640e);
    position: relative;
    margin-top: 3px;
}
.sun-badge {
    position: absolute;
    left: 11px;
    top: -9px;
    width: 19px;
    height: 19px;
    border-radius: 50%;
    background-color: #ff99a4;
    color: #222;
    font-size: 12px;
    line-height: 19px;
    text-align: center;
}
.weather-text {
    display: flex;
    flex-direction: column;
    margin-left: 12px;
    font-family: "Open Sans", sans-serif;
    font-size: 14px;
    line-height: 20px;
}
.cond {
    color: #c8c8c0;
}
.task-center {
    display: flex;
    align-items: center;
    padding-left: 14px;
}
.win-logo {
    width: 30px;
    height: 30px;
}
.task-search {
    width: 273px;
    height: 40px;
    margin-left: 16px;
    border-radius: 20px;
    background-color: #45483a;
    display: flex;
    align-items: center;
    padding-left: 14px;
    font-family: "Open Sans", sans-serif;
    font-size: 15.500px;
    color: #e8e8e0;
    gap: 11px;
}
.cat {
    width: 38px;
    height: 32px;
    margin-left: auto;
    margin-right: 18px;
}
.task-icons {
    display: flex;
    align-items: center;
    margin-left: 4px;
}
.task-app {
    width: 55px;
    height: 50px;
    position: relative;
    display: flex;
    align-items: center;
    justify-content: center;
    border-radius: 5px;
    padding-bottom: 2px;
}
.task-app.is-open {
    background-color: #33362a;
}
.task-app.has-dot::after, .task-app.is-open::after {
    content: "";
    position: absolute;
    bottom: 0;
    left: 50%;
    margin-left: -3px;
    width: 7px;
    height: 4px;
    border-radius: 2px;
    background-color: #9a9a9a;
}
.task-app.is-open::after {
    width: 20px;
    margin-left: -10px;
    background-color: #1a9bf0;
}
.tray {
    justify-self: end;
    display: flex;
    align-items: center;
    padding-right: 25px;
    font-family: "Open Sans", sans-serif;
    font-size: 14.200px;
    color: #f2f2f2;
}
.tray-lang {
    margin-left: 25px;
}
.tray-wifi {
    margin-left: 22px;
}
.tray-vol {
    margin-left: 9px;
}
.tray-batt {
    margin-left: 11px;
}
.tray-clock {
    display: flex;
    flex-direction: column;
    align-items: flex-end;
    line-height: 20px;
    margin-left: 21px;
}
.tray-bell {
    margin-left: 9px;
}
.tray-copilot {
    margin-left: 20px;
}
```
